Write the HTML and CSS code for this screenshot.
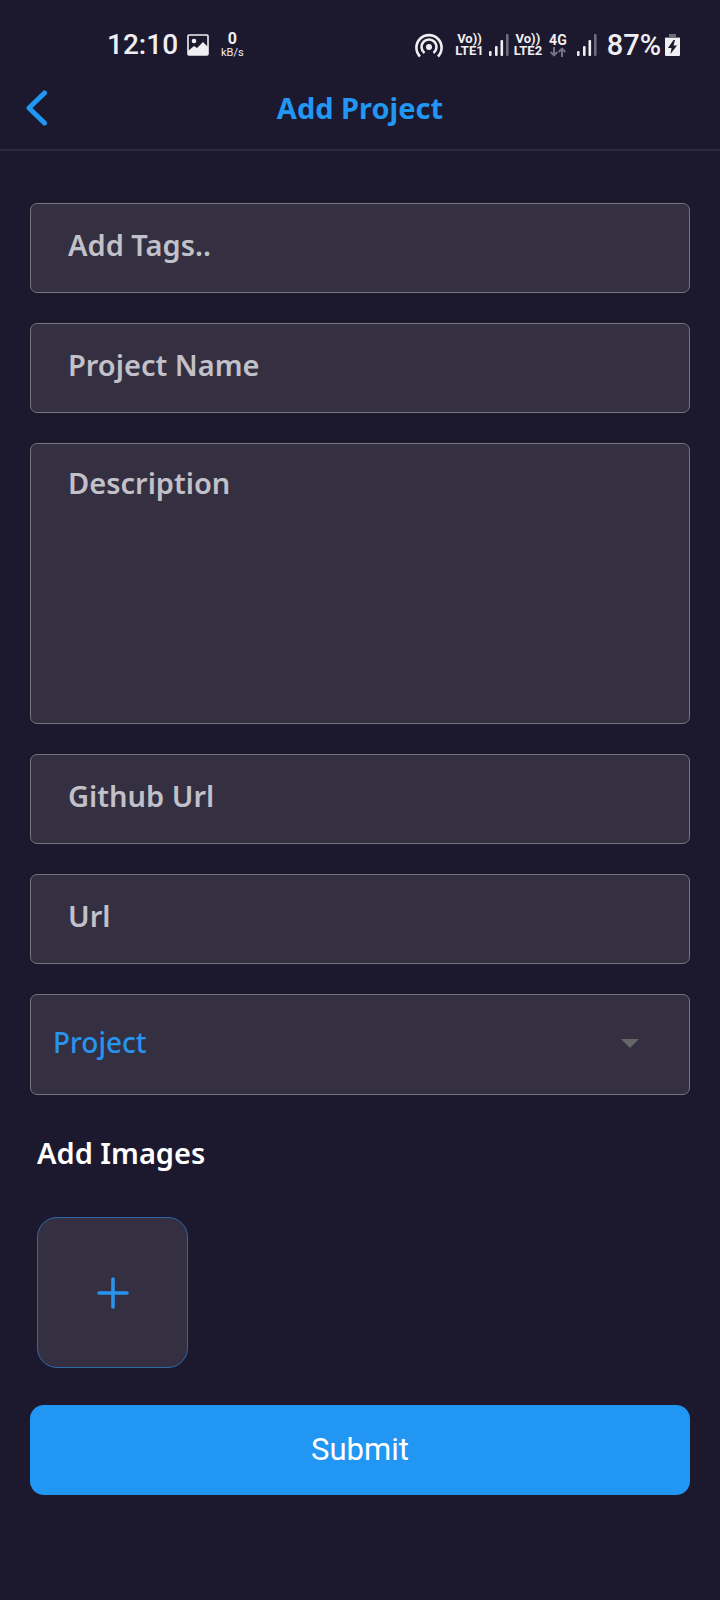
FILE: index.html
```html
<!DOCTYPE html>
<html lang="en">
<head>
<meta charset="utf-8">
<meta name="viewport" content="width=device-width, initial-scale=1">
<title>Add Project</title>
<link rel="stylesheet" href="styles.css">
</head>
<body>
<div class="status">
  <div class="status-left">
    <span class="clock">12:10</span>
    <svg class="picture" width="22" height="22" viewBox="0 0 22 22"><rect x="1" y="1" width="20" height="20" rx="1" fill="none" stroke="#efeff2" stroke-width="1.600"/><circle cx="7" cy="7" r="2.300" fill="#efeff2"/><path d="M1 17l6-5 3 2 6-6 5 5v8H1z" fill="#efeff2"/></svg>
    <span class="stack speed"><b>0</b><span>kB/s</span></span>
  </div>
  <div class="status-right">
    <svg class="hotspot" width="28" height="26" viewBox="0 0 28 26" fill="none" stroke="#efeff2" stroke-width="2.600"><circle cx="14" cy="15" r="3" fill="#efeff2" stroke="none"/><path d="M9.500 21a7.500 7.500 0 1 1 9 0M5 24.500a12.600 12.600 0 1 1 18 0"/></svg>
    <span class="stack lte"><b>Vo))</b><b>LTE1</b></span>
    <svg class="signal" width="20" height="22" viewBox="0 0 20 22" fill="#efeff2"><rect y="17" width="2.600" height="5" rx="1"/><rect x="6" y="12" width="2.600" height="10" rx="1"/><rect x="11.500" y="6" width="2.600" height="16" rx="1"/><rect x="17" width="2.600" height="22" rx="1" fill="#6e6b7b"/></svg>
    <span class="stack lte"><b>Vo))</b><b>LTE2</b></span>
    <span class="stack network"><b>4G</b><svg width="16" height="10" viewBox="0 0 16 10" fill="none" stroke="#747180" stroke-width="2"><path d="M4 0v8M0.700 5L4 8.400 7.300 5M12 10V2M8.700 5L12 1.600 15.300 5"/></svg></span>
    <svg class="signal" width="20" height="22" viewBox="0 0 20 22" fill="#efeff2"><rect y="17" width="2.600" height="5" rx="1"/><rect x="6" y="12" width="2.600" height="10" rx="1"/><rect x="11.500" y="6" width="2.600" height="16" rx="1"/><rect x="17" width="2.600" height="22" rx="1" fill="#6e6b7b"/></svg>
    <span class="percent">87%</span>
    <svg class="battery" width="15" height="24" viewBox="0 0 15 24"><path d="M4 1h7v3h4v2H0V4h4z" fill="#6e6b7b"/><path d="M0 5h15v17a1 1 0 0 1-1 1H1a1 1 0 0 1-1-1z" fill="#efeff2"/><path d="M8.500 7L3 15h3.500L5.500 21 12 12.500H8.500L10 7z" fill="#1c192e"/></svg>
  </div>
</div>
<header class="header">
  <button class="back" type="button" aria-label="Back"><svg width="22" height="36" viewBox="0 0 22 36" fill="none" stroke="#2196f3" stroke-width="5" stroke-linecap="round" stroke-linejoin="round"><path d="M18.500 3L3 18l15.500 15"/></svg></button>
  <h1 class="title">Add Project</h1>
</header>
<form class="form">
  <input class="field" type="text" placeholder="Add Tags.." aria-label="Add Tags">
  <input class="field" type="text" placeholder="Project Name" aria-label="Project Name">
  <textarea class="field description" placeholder="Description" aria-label="Description"></textarea>
  <input class="field" type="text" placeholder="Github Url" aria-label="Github Url">
  <input class="field" type="text" placeholder="Url" aria-label="Url">
  <div class="select-wrap">
    <select class="field select" aria-label="Type"><option>Project</option></select>
    <svg class="caret" width="18" height="9" viewBox="0 0 18 9"><path d="M0 0h18L9 9z" fill="#666567"/></svg>
  </div>
  <section class="images">
    <h2 class="subtitle">Add Images</h2>
    <button class="tile" type="button" aria-label="Add image"><svg width="32" height="32" viewBox="0 0 32 32" stroke="#2894ef" stroke-width="3.600" stroke-linecap="round"><path d="M16 2v28M2 16h28"/></svg></button>
  </section>
  <button class="submit" type="submit">Submit</button>
</form>
</body>
</html>
```
FILE: styles.css
```css
* { box-sizing: border-box; }
body {
  margin: 0;
  min-height: 100vh;
  background: #1c192e;
  color: #fff;
  font-family: "Noto Sans", "Open Sans", sans-serif;
}
svg { display: block; flex: none; }
button { padding: 0; font: inherit; cursor: pointer; }

.status {
  display: flex;
  justify-content: space-between;
  align-items: center;
  height: 72px;
  padding: 18px 40px 0 107px;
  color: #efeff2;
  font-family: Roboto, sans-serif;
}
.status-left, .status-right { display: flex; align-items: center; }
.clock { font-size: 28px; line-height: 32px; font-weight: 500; }
.picture { margin-left: 9px; }
.stack {
  display: flex;
  flex-direction: column;
  align-items: center;
  font-size: 13px;
  line-height: 12px;
}
.speed { margin-left: 12px; font-size: 11px; line-height: 12px; }
.speed b { font-size: 16px; line-height: 16px; }
.lte { margin-left: 12px; }
.signal { margin-left: 5px; }
.signal + .lte { margin-left: 5px; }
.network { margin-left: 7px; font-size: 14px; gap: 1px; }
.network + .signal { margin-left: 10px; }
.percent { margin-left: 10px; font-size: 29px; line-height: 32px; font-weight: 500; }
.battery { margin-left: 4px; }

.header {
  display: grid;
  grid-template-columns: 1fr auto 1fr;
  align-items: center;
  height: 79px;
  padding: 0 26px 6px;
  border-bottom: 2px solid #2d2a3d;
}
.back {
  justify-self: start;
  border: 0;
  background: none;
}
.title { margin: 0; font-size: 29px; line-height: 40px; font-weight: 700; color: #2196f3; }

.form {
  display: flex;
  flex-direction: column;
  gap: 30px;
  padding: 52px 30px 104px;
}
.field {
  display: block;
  width: 100%;
  height: 90px;
  margin: 0;
  padding: 0 37px 8px;
  border: 1px solid #76747c;
  border-radius: 7px;
  background: #343042;
  color: #c2c0c8;
  font: 600 29px/40px "Noto Sans", "Open Sans", sans-serif;
  appearance: none;
  outline: none;
}
.field::placeholder { color: #c2c0c8; opacity: 1; }
.description { height: 281px; padding-top: 19px; resize: none; }
.select-wrap { position: relative; }
.select { height: 101px; padding: 0 22px 6px; color: #2894ef; font-size: 28px; font-weight: 500; }
.caret { position: absolute; right: 51px; top: 45px; pointer-events: none; }

.images { padding: 8px 7px 7px; }
.subtitle { margin: 0 0 44px; font-size: 29px; line-height: 40px; font-weight: 600; }
.tile {
  display: grid;
  place-items: center;
  width: 151px;
  height: 151px;
  border: 1px solid #2d6ba8;
  border-radius: 20px;
  background: #343042;
}
.submit {
  height: 90px;
  border: 0;
  border-radius: 14px;
  background: #2196f3;
  color: #fff;
  font: 400 31px/40px Roboto, sans-serif;
}
```
